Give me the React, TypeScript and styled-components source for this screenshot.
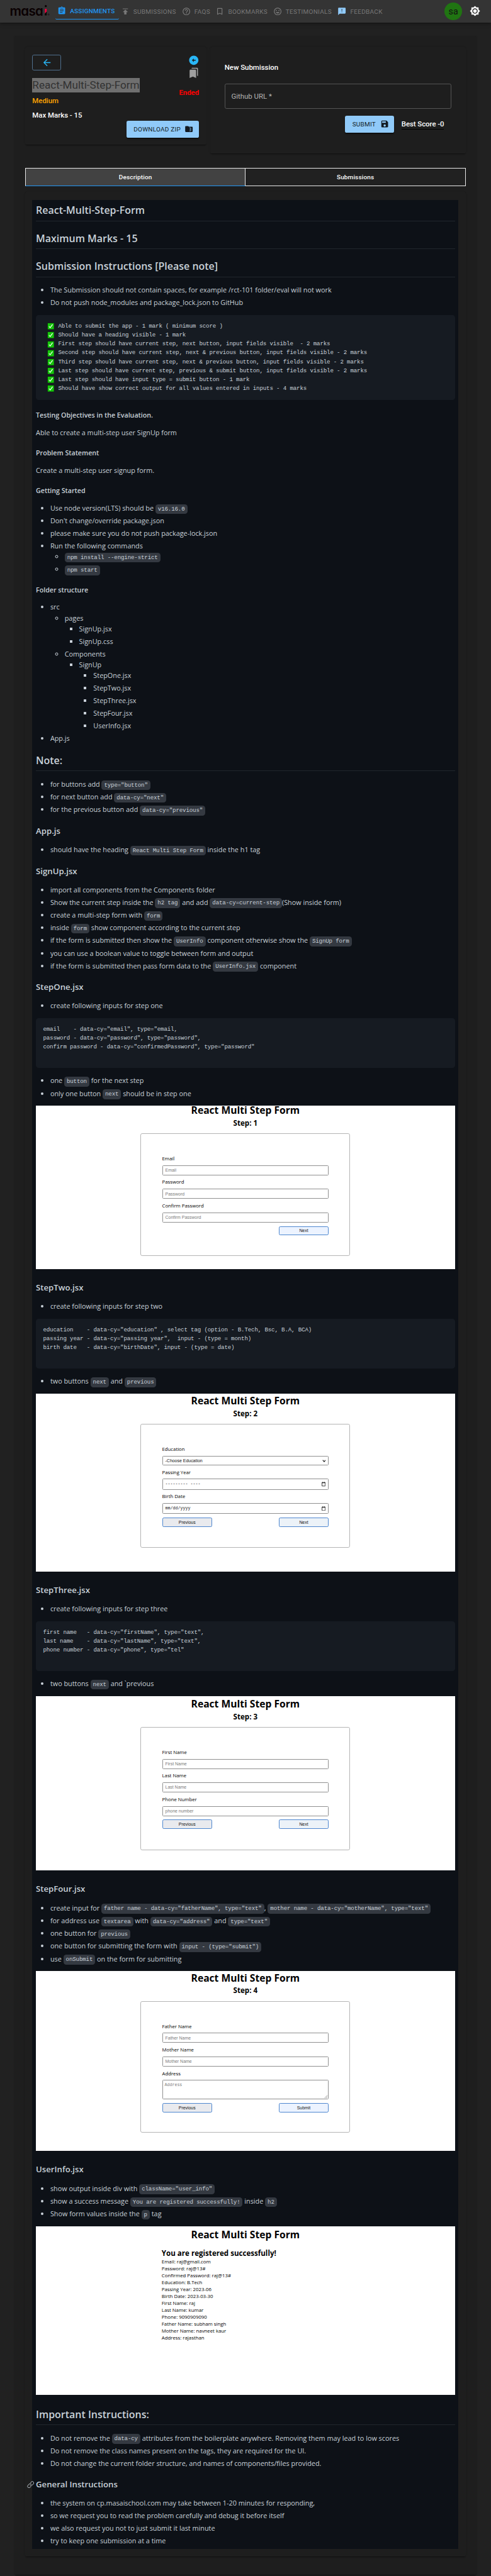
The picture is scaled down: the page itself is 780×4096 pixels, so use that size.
import React from "react";
import styled, { createGlobalStyle, css } from "styled-components";
import {
  MdArrowBack,
  MdArrowCircleLeft,
  MdAssignment,
  MdBookmarkBorder,
  MdBookmarks,
  MdBrightness7,
  MdFeedback,
  MdFolderZip,
  MdHelpOutline,
  MdInsertEmoticon,
  MdPublish,
  MdSave,
} from "react-icons/md";
import { GoLink } from "react-icons/go";

const roboto = `Roboto, "Liberation Sans", sans-serif`;
const prose = `"Open Sans", "Noto Sans", sans-serif`;
const mono = `"Liberation Mono", monospace`;

const GlobalStyle = createGlobalStyle`
  *, *::before, *::after { box-sizing: border-box; }
  html, body { margin: 0; background: #212121; overflow: hidden; }
`;

const Page = styled.div`
  zoom: 0.5708;
  width: 1366.5px;
  height: 7176px;
  overflow: hidden;
  background: #212121;
  font-family: ${roboto};
  color: #fff;
`;

/* ---------- top bar ---------- */

const TopBar = styled.header`
  position: relative;
  display: flex;
  align-items: center;
  height: 63px;
  padding: 0 30px 0 27px;
  background: #343434;
  box-shadow: 0 2px 5px rgba(0, 0, 0, 0.4), 0 5px 12px rgba(0, 0, 0, 0.25);
`;

const Logo = styled.div`
  display: flex;
  align-items: flex-start;
  width: 128px;
  color: #0a0002;
`;

const LogoText = styled.span`
  font: 600 36px/46px Inter, sans-serif;
  font-feature-settings: "cv11";
  letter-spacing: -1.1px;
  width: 94px;
  white-space: nowrap;
`;

const LogoI = styled.svg`
  width: 17px;
  height: 30px;
  margin-top: 6px;
`;

const Nav = styled.nav`
  display: flex;
  flex: 1;
  height: 47px;
`;

const NavItem = styled.a<{ $w: number; $active?: boolean }>`
  display: flex;
  align-items: center;
  gap: 10px;
  width: ${(p) => p.$w}px;
  padding: 3px 0 0 5px;
  font-size: 17.5px;
  letter-spacing: 0.55px;
  color: #787878;
  border-radius: 5px;
  border-bottom: 3px solid transparent;
  white-space: nowrap;
  svg {
    width: 25px;
    height: 25px;
    flex: none;
  }
  ${(p) =>
    p.$active &&
    css`
      color: #2196f3;
      font-weight: 500;
      letter-spacing: 0.4px;
      border-bottom-color: #2196f3;
      padding-top: 0;
      padding-bottom: 1px;
    `}
`;

const FeedbackIcon = styled(MdFeedback)`
  color: #90caf9;
`;

const Avatar = styled.div`
  width: 50px;
  height: 50px;
  border-radius: 50%;
  background: #207412;
  color: #121212;
  font-size: 25px;
  line-height: 52px;
  text-align: center;
  margin-right: 20px;
`;

const ThemeIcon = styled(MdBrightness7)`
  width: 30px;
  height: 30px;
`;

/* ---------- assignment cards ---------- */

const paper = css`
  background: #1e1e1e;
  border-radius: 5px;
  box-shadow: 0 3px 2px -2px rgba(0, 0, 0, 0.35), 0 1px 4px rgba(0, 0, 0, 0.22);
`;

const Main = styled.main`
  ${paper}
  width: 1286px;
  height: 7070px;
  margin: 39px 0 0 40px;
  padding: 30px;
`;

const Cards = styled.div`
  display: flex;
  align-items: flex-start;
  gap: 11px;
`;

const InfoCard = styled.section`
  ${paper}
  width: 504px;
  height: 271px;
  padding: 21px 20px 20px;
  display: flex;
  justify-content: space-between;
`;

const InfoLeft = styled.div`
  display: flex;
  flex-direction: column;
  align-items: flex-start;
  width: 262px;
`;

const InfoRight = styled.div`
  display: flex;
  flex-direction: column;
  align-items: flex-end;
`;

const BackButton = styled.button`
  width: 80px;
  height: 44px;
  border: 1px solid #4f6f8d;
  border-radius: 5px;
  background: none;
  color: #29b6f6;
  padding: 0;
  display: grid;
  place-items: center;
  svg {
    width: 30px;
    height: 30px;
  }
`;

const AssignmentTitle = styled.h1`
  margin: 20px 0 0;
  background: #6f6f6f;
  color: #323232;
  font-size: 30px;
  font-weight: 400;
  line-height: 40px;
  white-space: nowrap;
`;

const Line = styled.div<{ $top: number; $color?: string }>`
  margin-top: ${(p) => p.$top}px;
  color: ${(p) => p.$color || "#fff"};
  font-size: 20px;
  font-weight: 500;
  line-height: 30px;
  white-space: nowrap;
`;

const StatusIcons = styled.div`
  display: flex;
  flex-direction: column;
  align-items: center;
  gap: 4px;
  margin-right: -1px;
  svg {
    width: 31px;
    height: 31px;
  }
`;

const Ended = styled.div`
  margin-top: 24px;
  color: #ff0000;
  font-size: 20px;
  font-weight: 700;
  line-height: 30px;
`;

const SolidButton = styled.button<{ $w: number }>`
  width: ${(p) => p.$w}px;
  height: 46px;
  border: 0;
  border-radius: 5px;
  background: #90caf9;
  color: #121a22;
  font-family: ${roboto};
  font-size: 17.5px;
  letter-spacing: 0.45px;
  display: flex;
  align-items: center;
  justify-content: space-between;
  padding: 0 15px 0 20px;
  white-space: nowrap;
  box-shadow: 0 3px 2px -1px rgba(0, 0, 0, 0.3), 0 2px 4px rgba(0, 0, 0, 0.3);
  svg {
    width: 25px;
    height: 25px;
  }
`;

const DownloadRow = styled.div`
  margin-top: 64px;
`;

const SubmitCard = styled.section`
  ${paper}
  width: 711px;
  height: 296px;
  padding: 41px 40px;
`;

const UrlField = styled.div`
  display: flex;
  align-items: center;
  height: 70px;
  margin-top: 30px;
  padding-left: 17px;
  border: 1px solid #555;
  border-radius: 5px;
  color: #b4b4b4;
  font-size: 20px;
`;

const SubmitRow = styled.div`
  display: flex;
  align-items: flex-start;
  justify-content: flex-end;
  gap: 20px;
  margin-top: 20px;
  padding-right: 20px;
`;

const BestScore = styled.div`
  font-size: 20px;
  font-weight: 500;
  line-height: 36px;
  height: 38.5px;
  padding-top: 4px;
  letter-spacing: -0.1px;
  border-bottom: 2.5px solid #000;
  white-space: nowrap;
`;

const Tabs = styled.div`
  display: flex;
  height: 50px;
  margin-top: 40px;
`;

const Tab = styled.button<{ $active?: boolean }>`
  flex: 1;
  border: 1px solid #e8e8e8;
  border-left-width: ${(p) => (p.$active ? "1px" : "0")};
  background: ${(p) => (p.$active ? "#424242" : "#212121")};
  border-bottom: ${(p) => (p.$active ? "3px solid #2196f3" : "1px solid #e8e8e8")};
  color: #fff;
  font: 500 17.5px ${roboto};
  letter-spacing: 0.27px;
`;

/* ---------- markdown ---------- */

const DocCard = styled.section`
  ${paper}
  margin-top: 17px;
  padding: 23px 20px 20px;
`;

const Markdown = styled.article`
  display: flow-root;
  background: #0d1117;
  color: #c9d1d9;
  padding: 10px;
  height: 6543px;
  font-family: ${prose};
  font-size: 19px;
  line-height: 30px;
  white-space: nowrap;
`;

const H2 = styled.h2`
  margin: 30px 0 20px;
  padding-bottom: 9px;
  border-bottom: 1px solid #21262d;
  font-size: 28px;
  line-height: 37.5px;
  font-weight: 600;
  &:first-child {
    margin-top: 0;
  }
`;

const H3 = styled.h3`
  margin: 30px 0 20px;
  font-size: 23.1px;
  line-height: 31.25px;
  font-weight: 600;
`;

const H4 = styled.h4`
  margin: 30px 0 20px;
  font-size: 18.7px;
  line-height: 25px;
  font-weight: 600;
`;

const P = styled.p`
  margin: 0 0 20px;
`;

const Ul = styled.ul`
  margin: 0 0 20px;
  padding-left: 40px;
  & & {
    margin: 0;
  }
`;

const Li = styled.li`
  & + & {
    margin-top: 5px;
  }
  &:has(> code) {
    padding-bottom: 0.45px;
  }
`;

const Code = styled.code`
  padding: 4px 7px;
  border-radius: 7.5px;
  background: #343941;
  font-family: ${mono};
  font-size: 16px;
  line-height: 1;
  letter-spacing: -0.25px;
  white-space: pre;
`;

const Pre = styled.pre`
  margin: 0 0 20px;
  padding: 20px;
  border-radius: 7.5px;
  background: #161b22;
  font-family: ${mono};
  font-size: 16px;
  line-height: 24.65px;
  letter-spacing: -0.25px;
`;

const PreLine = styled.div`
  display: flex;
  height: 24.65px;
  white-space: pre;
`;

const CheckMark = styled.svg`
  width: 20px;
  height: 20px;
  margin: 2px 11px 0 11px;
  flex: none;
`;

const LinkedH3 = styled(H3)`
  display: flex;
  align-items: center;
  gap: 5px;
  margin-left: -25px;
  svg {
    width: 20px;
    height: 20px;
  }
`;

/* ---------- form previews ---------- */

const Shot = styled.figure<{ $h: number; $top: number }>`
  height: ${(p) => p.$h}px;
  margin: 0 0 37px;
  padding-top: ${(p) => p.$top}px;
  background: #fff;
  color: #000;
`;

const ShotTitle = styled.div`
  font-size: 27.4px;
  font-weight: 700;
  line-height: 26px;
  text-align: center;
`;

const ShotStep = styled.div`
  margin-top: 6px;
  font-size: 20.3px;
  font-weight: 700;
  line-height: 30px;
  text-align: center;
`;

const FormCard = styled.div<{ $h: number }>`
  width: 583px;
  height: ${(p) => p.$h}px;
  margin: 15px auto 0;
  padding: 59px 58px 0;
  border: 1px solid #b4b4b4;
  border-radius: 5px;
`;

const Label = styled.div`
  height: 20px;
  margin-bottom: 7.4px;
  font-size: 13.6px;
  line-height: 20px;
`;

const Box = styled.div<{ $h: number; $tone?: string; $mono?: boolean }>`
  display: flex;
  align-items: center;
  justify-content: space-between;
  height: ${(p) => p.$h}px;
  margin-bottom: 10px;
  padding: 0 7px;
  border: 1px solid #909090;
  border-radius: 2.5px;
  color: ${(p) => p.$tone || "#7a7a7a"};
  font-family: ${(p) => (p.$mono ? mono : `"Liberation Sans", sans-serif`)};
  font-size: ${(p) => (p.$mono ? 11.7 : 12.2)}px;
  line-height: 20px;
  white-space: pre;
  svg {
    width: 11px;
    height: 13px;
  }
`;

const Area = styled(Box)`
  align-items: flex-start;
  padding: 3px 1px 1px 5px;
  svg {
    width: 9px;
    height: 9px;
    align-self: flex-end;
  }
`;

const Buttons = styled.div`
  display: flex;
  justify-content: space-between;
`;

const FormButton = styled.button<{ $bg: string }>`
  width: 139px;
  height: 26px;
  padding: 0;
  margin-left: auto;
  border: 1px solid #4d86cf;
  border-radius: 4px;
  background: ${(p) => p.$bg};
  color: #111;
  font: 12.1px "Liberation Sans", sans-serif;
  &:first-child:not(:last-child) {
    margin-left: 0;
  }
`;

const Result = styled.div`
  margin: 23px 0 0 350px;
  font-size: 13.7px;
  line-height: 19.42px;
`;

const ResultTitle = styled.div`
  font-size: 20.3px;
  font-weight: 700;
  line-height: 30px;
`;

const Calendar = () => (
  <svg viewBox="0 0 11 13" fill="none" stroke="#111" strokeWidth="1.4">
    <path d="M1 2.2h9v9.8H1zM1 3.2h9M3 .6v2M8 .6v2" />
  </svg>
);

const Check = () => (
  <CheckMark viewBox="0 0 20 20">
    <rect x="0.7" y="0.7" width="18.6" height="18.6" rx="1" fill="#16c60c" stroke="#0a1a0c" strokeWidth="1.4" />
    <path d="M5 10.5l3.2 3.6L15 5.2" fill="none" stroke="#fff" strokeWidth="2" />
  </CheckMark>
);

const marks = [
  "Able to submit the app - 1 mark ( minimum score )",
  "Should have a heading visible - 1 mark",
  "First step should have current step, next button, input fields visible  - 2 marks",
  "Second step should have current step, next & previous button, input fields visible - 2 marks",
  "Third step should have current step, next & previous button, input fields visible - 2 marks",
  "Last step should have current step, previous & submit button, input fields visible - 2 marks",
  "Last step should have input type = submit button - 1 mark",
  "Should have show correct output for all values entered in inputs - 4 marks",
];

const results = [
  "Email: raj@gmail.com",
  "Password: raj@13#",
  "Confirmed Password: raj@13#",
  "Education: B.Tech",
  "Passing Year: 2023-06",
  "Birth Date: 2023-03-30",
  "First Name: raj",
  "Last Name: kumar",
  "Phone: 9090909090",
  "Father Name: subham singh",
  "Mother Name: navneet kaur",
  "Address: rajasthan",
];

function Preview(props: {
  step: number;
  height: number;
  top: number;
  card: number;
  children: React.ReactNode;
  action?: string;
  actionBg?: string;
}) {
  const { step, height, top, card, children, action = "Next", actionBg = "#ecf2f8" } = props;
  return (
    <Shot $h={height} $top={top}>
      <ShotTitle>React Multi Step Form</ShotTitle>
      <ShotStep>Step: {step}</ShotStep>
      <FormCard $h={card}>
        {children}
        <Buttons>
          {step > 1 && <FormButton $bg="#e9eaee">Previous</FormButton>}
          <FormButton $bg={actionBg}>{action}</FormButton>
        </Buttons>
      </FormCard>
    </Shot>
  );
}

function Field({ label, placeholder }: { label: string; placeholder?: string }) {
  return (
    <>
      <Label>{label}</Label>
      <Box $h={28.4}>{placeholder || label}</Box>
    </>
  );
}

export default function App() {
  return (
    <Page>
      <GlobalStyle />
      <TopBar>
        <Logo>
          <LogoText>masa</LogoText>
          <LogoI viewBox="0 0 17 30">
            <circle cx="6.5" cy="3" r="2.9" fill="#0a0002" />
            <path d="M4 10.5h5v8L4 24z" fill="#f0003c" />
            <path d="M9 18.5V29H4v-5z" fill="#0a0002" />
            <circle cx="14.3" cy="26.4" r="2" fill="none" stroke="#0a0002" strokeWidth="0.8" />
          </LogoI>
        </Logo>
        <Nav>
          <NavItem $w={176} $active>
            <MdAssignment />
            ASSIGNMENTS
          </NavItem>
          <NavItem $w={170}>
            <MdPublish />
            SUBMISSIONS
          </NavItem>
          <NavItem $w={94}>
            <MdHelpOutline />
            FAQS
          </NavItem>
          <NavItem $w={160}>
            <MdBookmarkBorder />
            BOOKMARKS
          </NavItem>
          <NavItem $w={180}>
            <MdInsertEmoticon />
            TESTIMONIALS
          </NavItem>
          <NavItem $w={140}>
            <FeedbackIcon />
            FEEDBACK
          </NavItem>
        </Nav>
        <Avatar>sa</Avatar>
        <ThemeIcon />
      </TopBar>

      <Main>
        <Cards>
          <InfoCard>
            <InfoLeft>
              <BackButton>
                <MdArrowBack />
              </BackButton>
              <AssignmentTitle>React-Multi-Step-Form</AssignmentTitle>
              <Line $top={10} $color="#ffa500">
                Medium
              </Line>
              <Line $top={10}>Max Marks - 15</Line>
            </InfoLeft>
            <InfoRight>
              <StatusIcons>
                <MdArrowCircleLeft color="#29b6f6" />
                <MdBookmarks color="#9e9e9e" />
              </StatusIcons>
              <Ended>Ended</Ended>
              <DownloadRow>
                <SolidButton $w={202}>
                  DOWNLOAD ZIP
                  <MdFolderZip />
                </SolidButton>
              </DownloadRow>
            </InfoRight>
          </InfoCard>
          <SubmitCard>
            <Line $top={0}>New Submission</Line>
            <UrlField>Github URL *</UrlField>
            <SubmitRow>
              <SolidButton $w={137}>
                SUBMIT
                <MdSave />
              </SolidButton>
              <BestScore>Best Score -0</BestScore>
            </SubmitRow>
          </SubmitCard>
        </Cards>
        <Tabs>
          <Tab $active>Description</Tab>
          <Tab>Submissions</Tab>
        </Tabs>

        <DocCard>
          <Markdown>
            <H2>React-Multi-Step-Form</H2>
            <H2>Maximum Marks - 15</H2>
            <H2>Submission Instructions [Please note]</H2>
            <Ul>
              <Li>The Submission should not contain spaces, for example /rct-101 folder/eval will not work</Li>
              <Li>Do not push node_modules and package_lock.json to GitHub</Li>
            </Ul>
            <Pre as="div">
              {marks.map((m) => (
                <PreLine key={m}>
                  <Check />
                  {m}
                </PreLine>
              ))}
            </Pre>
            <H4>Testing Objectives in the Evaluation.</H4>
            <P>Able to create a multi-step user SignUp form</P>
            <H4>Problem Statement</H4>
            <P>Create a multi-step user signup form.</P>
            <H4>Getting Started</H4>
            <Ul>
              <Li>
                Use node version(LTS) should be <Code>v16.16.0</Code>
              </Li>
              <Li>Don't change/override package.json</Li>
              <Li>please make sure you do not push package-lock.json</Li>
              <Li>
                Run the following commands
                <Ul>
                  <Li>
                    <Code>npm install --engine-strict</Code>
                  </Li>
                  <Li>
                    <Code>npm start</Code>
                  </Li>
                </Ul>
              </Li>
            </Ul>
            <H4>Folder structure</H4>
            <Ul>
              <Li>
                src
                <Ul>
                  <Li>
                    pages
                    <Ul>
                      <Li>SignUp.jsx</Li>
                      <Li>SignUp.css</Li>
                    </Ul>
                  </Li>
                  <Li>
                    Components
                    <Ul>
                      <Li>
                        SignUp
                        <Ul>
                          <Li>StepOne.jsx</Li>
                          <Li>StepTwo.jsx</Li>
                          <Li>StepThree.jsx</Li>
                          <Li>StepFour.jsx</Li>
                          <Li>UserInfo.jsx</Li>
                        </Ul>
                      </Li>
                    </Ul>
                  </Li>
                </Ul>
              </Li>
              <Li>App.js</Li>
            </Ul>
            <H2>Note:</H2>
            <Ul>
              <Li>
                for buttons add <Code>type="button"</Code>
              </Li>
              <Li>
                for next button add <Code>data-cy="next"</Code>
              </Li>
              <Li>
                for the previous button add <Code>data-cy="previous"</Code>
              </Li>
            </Ul>
            <H3>App.js</H3>
            <Ul>
              <Li>
                should have the heading <Code>React Multi Step Form</Code> inside the h1 tag
              </Li>
            </Ul>
            <H3>SignUp.jsx</H3>
            <Ul>
              <Li>import all components from the Components folder</Li>
              <Li>
                Show the current step inside the <Code>h2 tag</Code> and add <Code>data-cy=current-step</Code>(Show
                inside form)
              </Li>
              <Li>
                create a multi-step form with <Code>form</Code>
              </Li>
              <Li>
                inside <Code>form</Code> show component according to the current step
              </Li>
              <Li>
                if the form is submitted then show the <Code>UserInfo</Code> component otherwise show the{" "}
                <Code>SignUp form</Code>
              </Li>
              <Li>you can use a boolean value to toggle between form and output</Li>
              <Li>
                if the form is submitted then pass form data to the <Code>UserInfo.jsx</Code> component
              </Li>
            </Ul>
            <H3>StepOne.jsx</H3>
            <Ul>
              <Li>create following inputs for step one</Li>
            </Ul>
            <Pre>
              {`email    - data-cy="email", type="email,
password - data-cy="password", type="password",
confirm password - data-cy="confirmedPassword", type="password"
 `}
            </Pre>
            <Ul>
              <Li>
                one <Code>button</Code> for the next step
              </Li>
              <Li>
                only one button <Code>next</Code> should be in step one
              </Li>
            </Ul>
            <Preview step={1} height={455} top={0} card={342} actionBg="#ecf3ff">
              <Field label="Email" />
              <Field label="Password" />
              <Field label="Confirm Password" />
            </Preview>

            <H3>StepTwo.jsx</H3>
            <Ul>
              <Li>create following inputs for step two</Li>
            </Ul>
            <Pre>
              {`education    - data-cy="education" , select tag (option - B.Tech, Bsc, B.A, BCA)
passing year - data-cy="passing year",  input - (type = month)
birth date   - data-cy="birthDate", input - (type = date)
 `}
            </Pre>
            <Ul>
              <Li>
                two buttons <Code>next</Code> and <Code>previous</Code>
              </Li>
            </Ul>
            <Preview step={2} height={495} top={7.5} card={345}>
              <Label>Education</Label>
              <Box $h={27} $tone="#111">
                -Choose Education
                <svg viewBox="0 0 11 13" fill="none" stroke="#111" strokeWidth="1.8">
                  <path d="M3 4.5l4 4.5 4-4.5" />
                </svg>
              </Box>
              <Label>Passing Year</Label>
              <Box $h={30.3} $tone="#111" $mono>
                --------- ----
                <Calendar />
              </Box>
              <Label>Birth Date</Label>
              <Box $h={30.3} $tone="#111" $mono>
                mm/dd/yyyy
                <Calendar />
              </Box>
            </Preview>

            <H3>StepThree.jsx</H3>
            <Ul>
              <Li>create following inputs for step three</Li>
            </Ul>
            <Pre>
              {`first name   - data-cy="firstName", type="text",
last name    - data-cy="lastName", type="text",
phone number - data-cy="phone", type="tel"
 `}
            </Pre>
            <Ul>
              <Li>
                two buttons <Code>next</Code> and `previous
              </Li>
            </Ul>
            <Preview step={3} height={486} top={9.5} card={343}>
              <Field label="First Name" />
              <Field label="Last Name" />
              <Field label="Phone Number" placeholder="phone number" />
            </Preview>

            <H3>StepFour.jsx</H3>
            <Ul>
              <Li>
                create input for <Code>father name - data-cy="fatherName", type="text"</Code>,{" "}
                <Code>mother name - data-cy="motherName", type="text"</Code>
              </Li>
              <Li>
                for address use <Code>textarea</Code> with <Code>data-cy="address"</Code> and{" "}
                <Code>type="text"</Code>
              </Li>
              <Li>
                one button for <Code>previous</Code>
              </Li>
              <Li>
                one button for submitting the form with <Code>input - (type="submit")</Code>
              </Li>
              <Li>
                use <Code>onSubmit</Code> on the form for submitting
              </Li>
            </Ul>
            <Preview step={4} height={501} top={6.5} card={367} action="Submit" actionBg="#ecf3ff">
              <Field label="Father Name" />
              <Field label="Mother Name" />
              <Label>Address</Label>
              <Area $h={54} $mono>
                Address
                <svg viewBox="0 0 9 9" stroke="#555" strokeWidth="1">
                  <path d="M1 9L9 1M5 9l4-4" />
                </svg>
              </Area>
            </Preview>

            <H3>UserInfo.jsx</H3>
            <Ul>
              <Li>
                show output inside div with <Code>className="user_info"</Code>
              </Li>
              <Li>
                show a success message <Code>You are registered successfully!</Code> inside <Code>h2</Code>
              </Li>
              <Li>
                Show form values inside the <Code>p</Code> tag
              </Li>
            </Ul>
            <Shot $h={469} $top={10}>
              <ShotTitle>React Multi Step Form</ShotTitle>
              <Result>
                <ResultTitle>You are registered successfully!</ResultTitle>
                {results.map((r) => (
                  <div key={r}>{r}</div>
                ))}
              </Result>
            </Shot>

            <H2>Important Instructions:</H2>
            <Ul>
              <Li>
                Do not remove the <Code>data-cy</Code> attributes from the boilerplate anywhere. Removing them may lead
                to low scores
              </Li>
              <Li>Do not remove the class names present on the tags, they are required for the UI.</Li>
              <Li>Do not change the current folder structure, and names of components/files provided.</Li>
            </Ul>
            <LinkedH3>
              <GoLink />
              General Instructions
            </LinkedH3>
            <Ul>
              <Li>the system on cp.masaischool.com may take between 1-20 minutes for responding,</Li>
              <Li>so we request you to read the problem carefully and debug it before itself</Li>
              <Li>we also request you not to just submit it last minute</Li>
              <Li>try to keep one submission at a time</Li>
            </Ul>
          </Markdown>
        </DocCard>
      </Main>
    </Page>
  );
}
